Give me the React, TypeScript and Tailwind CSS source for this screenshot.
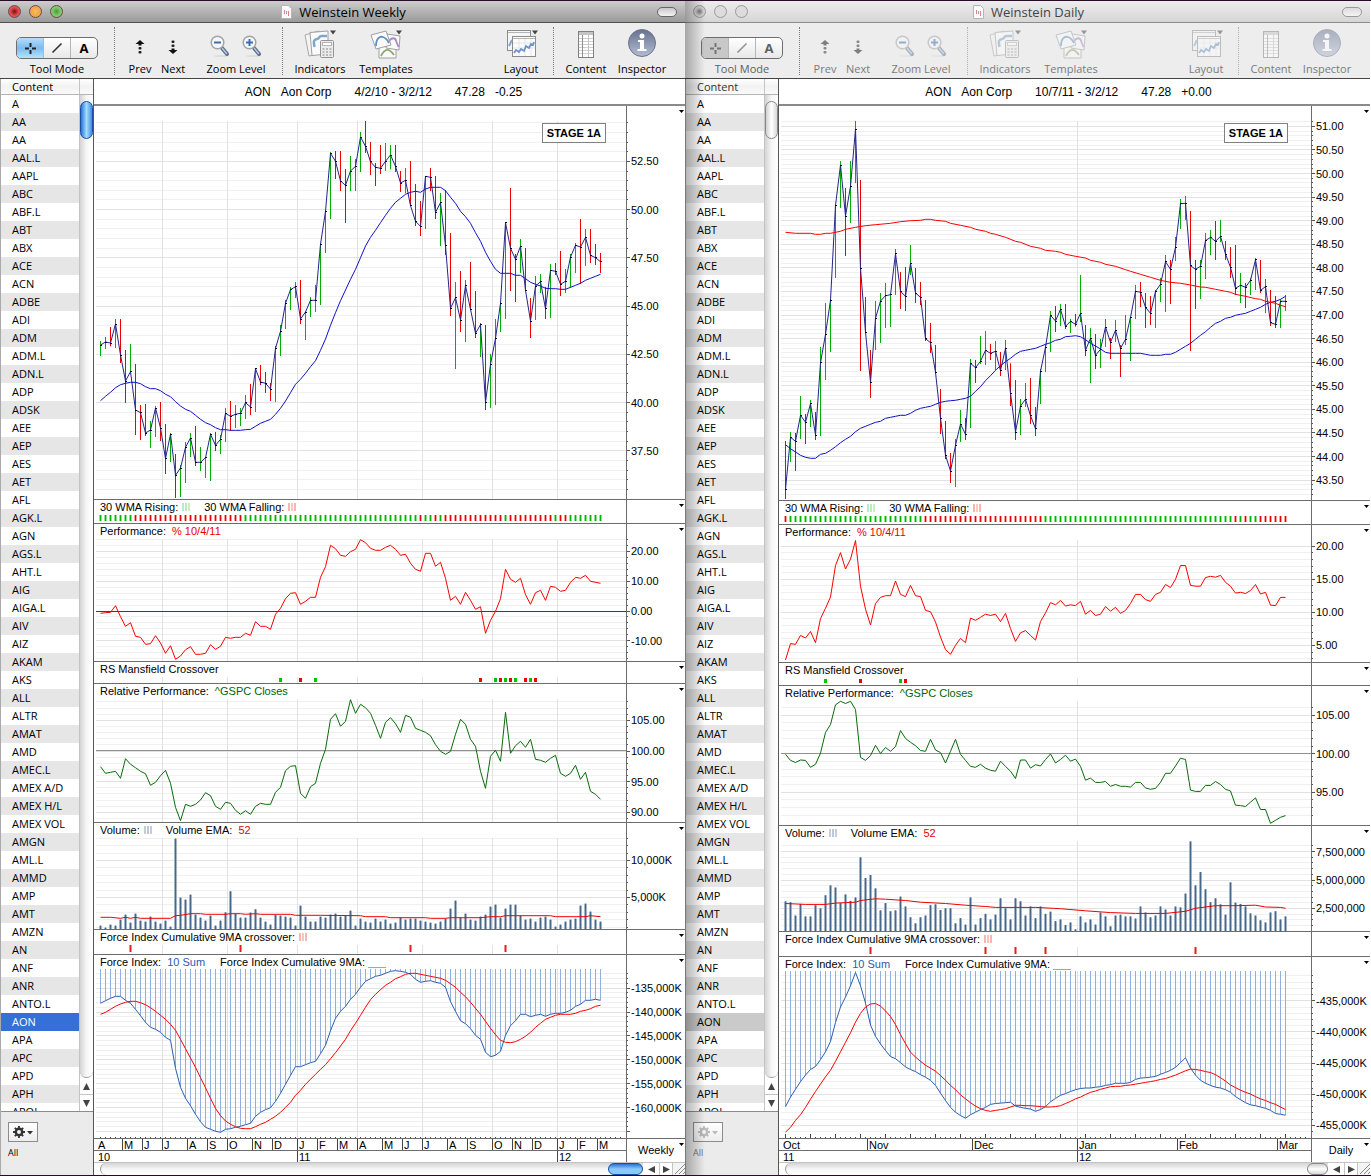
import { type ReactNode } from "react";

/* ------------------------------------------------------------------ */
/* Data                                                                */
/* ------------------------------------------------------------------ */

const SYMBOLS =
  "A,AA,AA,AAL.L,AAPL,ABC,ABF.L,ABT,ABX,ACE,ACN,ADBE,ADI,ADM,ADM.L,ADN.L,ADP,ADSK,AEE,AEP,AES,AET,AFL,AGK.L,AGN,AGS.L,AHT.L,AIG,AIGA.L,AIV,AIZ,AKAM,AKS,ALL,ALTR,AMAT,AMD,AMEC.L,AMEX A/D,AMEX H/L,AMEX VOL,AMGN,AML.L,AMMD,AMP,AMT,AMZN,AN,ANF,ANR,ANTO.L,AON,APA,APC,APD,APH,APOL".split(
    ",",
  );

// A series lists one depth per bar, in `unit` pixels below `base`.
type Scale = { base: number; unit: number };
type Pair = [number, number];

const nums = (s: string) => s.trim().split(/\s+/).map(Number);
const pairs = (s: string): Pair[] =>
  s.trim().split(/\s+/).map((p) => p.split(":").map(Number) as Pair);
const dense = (s: string): Pair[] => nums(s).map((v, i) => [i, v] as Pair);

// high, low, close
const weeklyBars = nums(`
723 768 735 711 747 726 681 739 729 657 744 672 657 789 765 750 909 843 732 815 815 792 1005 930 915 1020 938 912 1008 999
963 1044 990 918 1011 924 906 1023 984 972 1122 1076 999 1086 1002 1062 1194 1126 1095 1191 1104 1026 1149 1042 999 1071 1014 978 1098 1087
1041 1113 1087 1071 1134 1073 999 1143 1003 996 1053 1036 1005 1062 1018 924 1026 940 903 993 949 915 984 943 924 978 940 885 957 908
852 945 921 804 936 806 795 855 846 816 879 850 849 903 867 738 906 745 675 768 694 600 687 610 561 630 569 546 594 560
540 672 657 633 720 636 591 651 601 555 636 601 430 615 433 330 459 334 156 357 160 153 237 184 153 273 243 207 369 256
168 273 213 177 273 199 96 216 111 63 159 139 126 225 185 189 258 202 135 222 205 129 213 184 135 208 165 135 216 199
213 276 249 204 280 241 183 318 317 252 378 364 303 408 379 229 387 229 204 273 232 228 357 337 279 438 308 270 465 437
399 648 625 546 807 593 513 696 660 540 726 557 486 630 628 573 714 700 669 771 674 675 930 907 762 924 793 657 915 715
609 696 610 366 657 368 264 573 445 462 606 478 417 519 439 444 573 571 594 714 663 528 660 558 522 579 545 561 657 626
492 654 511 489 525 514 453 588 553 507 579 544 462 564 471 429 519 436 357 552 441 387 498 412 387 489 466 432 495 473
459 519 485`);

const weeklyAverage = dense(`
902 889 877 863 854 850 847 847 851 860 866 866 872 883 890 905 918 928 934 946 958 968 974 983 989 989 991 991 991 989
988 979 970 964 958 943 925 903 878 853 838 820 800 782 751 717 676 638 602 570 538 508 473 438 412 391 368 346 325 307
295 283 277 274 277 267 262 262 262 272 292 310 334 350 370 398 424 457 484 508 520 520 520 526 526 536 547 553 558 565
566 566 568 568 562 556 550 541 535 529 523`);

const weeklyPerformance = dense(`
340 338 337 317 350 379 368 409 412 433 431 407 429 460 437 478 468 449 440 463 463 460 434 448 439 412 415 412 412 400
406 365 379 379 388 343 325 296 280 278 313 304 292 292 232 200 136 146 166 169 155 148 119 128 145 151 151 142 136 148
166 163 190 208 214 160 160 199 187 235 301 289 313 277 301 328 320 400 361 334 296 208 238 247 235 284 313 278 271 301
259 262 274 271 247 232 235 226 244 247 250`);

const weeklyRelative = dense(`
800 820 817 814 835 776 793 803 814 821 856 847 827 811 850 922 962 913 919 913 900 878 887 919 928 907 910 931 943 932
943 919 910 913 913 877 862 812 799 797 880 895 860 850 790 748 658 641 679 664 599 640 613 623 640 676 715 667 653 671
697 646 652 685 691 697 707 734 754 763 754 703 658 673 718 739 814 865 769 751 784 637 760 737 724 742 718 778 781 787
775 766 820 829 820 796 838 817 874 883 898`);

const weeklyVolume = nums(`
317 323 314 317 299 284 308 281 302 305 290 305 311 302 320 56 233 239 224 284 293 302 287 317 302 277 214 281 293 293
278 268 293 305 314 285 287 290 293 317 257 290 305 305 290 293 284 281 290 287 272 317 296 305 308 296 305 299 311 308
293 299 296 296 302 305 308 311 305 296 266 242 293 281 299 302 290 284 260 254 293 266 254 254 287 299 296 305 293 290
299 320 314 305 299 296 257 251 275 299 305`);

const weeklyVolumeEma = pairs(
  "0:292 2:292 4:295 5:292 6:295 7:292 8:295 14:295 15:287 16:286 18:281 20:281 21:283 25:283 26:281 28:281 29:283 31:281 32:283 38:283 39:286 44:286 52:287 53:290 57:290 58:293 65:293 66:295 69:295 70:293 76:293 78:290 80:290 81:287 90:287 91:290 97:290 98:287 100:290",
);

const weeklyForce = dense(`
550 542 535 529 529 541 550 568 587 607 622 628 637 652 661 745 802 835 857 883 905 922 928 934 937 928 926 922 919 914
910 889 877 869 863 844 820 793 766 740 740 734 728 724 701 676 632 595 574 559 538 523 502 484 476 469 466 460 454 452
454 457 463 478 487 484 482 487 490 502 545 574 602 611 626 646 658 697 710 706 694 646 617 602 583 583 590 586 583 589
583 580 580 577 571 559 553 541 541 538 541`);

const weeklyForceAverage = dense(`
583 577 568 559 552 547 544 544 548 554 563 574 586 598 613 631 658 686 714 742 773 803 835 865 887 903 913 920 925 926
926 920 913 907 898 889 877 862 847 826 811 793 778 763 748 734 716 698 678 658 632 610 586 562 539 523 509 496 487 476
470 463 460 460 463 466 469 472 475 481 491 502 517 530 547 565 583 604 625 644 661 667 668 665 658 649 637 622 610 598
592 586 583 583 583 580 574 571 566 559 556`);

const dailyBars = nums(`
1023 1197 1168 996 1086 1012 999 1113 1024 888 1017 946 942 1032 967 900 981 911 936 1020 1005 741 1008 788 609 840 703 598 756 601
316 534 316 183 324 195 264 468 348 183 369 259 63 249 88 240 813 505 591 697 697 750 894 847 603 750 655 579 729 603
549 684 587 583 681 584 447 585 461 516 627 574 501 633 589 435 525 490 504 609 579 546 615 592 600 723 716 669 759 728
735 820 817 867 1002 955 963 1077 1066 1059 1149 1113 1017 1161 1036 930 1026 972 954 1020 1003 777 984 790 780 849 803 708 792 784
693 795 751 732 780 760 723 810 754 756 828 812 720 810 745 790 918 880 840 1020 996 897 1005 918 849 921 898 834 972 947
921 1008 986 807 912 814 735 816 742 633 756 646 618 696 663 612 678 628 612 687 679 657 699 664 642 680 673 525 666 640
675 768 751 684 849 715 702 807 766 717 804 748 657 741 681 714 777 727 660 726 691 735 831 745 645 735 718 651 783 652
555 657 574 546 621 577 579 684 622 588 675 640 570 684 574 534 606 553 465 636 485 480 612 508 411 483 442 297 387 311
288 360 310 333 753 497 480 627 508 480 597 499 399 537 422 390 465 412 363 480 424 360 426 409 423 480 462 441 534 502
435 585 565 519 609 556 549 624 562 534 585 541 474 570 479 480 579 571 537 639 560 570 678 668 588 684 673 597 684 604
585 633 604`);

const dailyAverage = dense(`
1034 1046 1056 1066 1072 1075 1075 1063 1060 1051 1040 1028 1018 1009 995 985 979 973 967 964 955 952 949 946 946 940 931 925 922 919
913 907 904 902 901 898 895 889 874 860 842 827 811 797 785 775 763 754 751 748 745 739 733 728 721 718 710 709 707 710
719 730 738 747 757 760 760 760 760 760 760 760 763 766 766 766 763 763 757 748 739 730 718 706 695 682 670 664 655 652
646 643 640 634 628 622 613 607 604 598 589`);

const dailyLongAverage = pairs(
  "0:397 2:400 5:400 6:403 7:403 8:400 9:400 11:394 12:388 14:382 16:377 18:374 21:370 23:365 25:362 27:361 28:358 29:358 30:361 32:364 33:370 35:376 37:382 38:388 40:394 41:400 42:403 44:412 46:424 47:427 49:439 51:445 52:451 54:454 55:457 56:463 58:469 60:474 61:481 63:487 64:493 66:499 68:509 69:514 71:523 73:532 75:541 77:547 79:550 81:555 83:561 84:562 86:568 88:574 89:577 90:583 92:589 94:596 95:598 96:604 98:610 99:616 100:620",
);

const dailyPerformance = dense(`
371 333 335 314 320 305 331 275 251 225 152 122 160 137 94 200 253 290 240 226 222 222 188 219 224 198 222 224 256 259
283 318 347 358 337 321 331 274 279 272 265 268 265 282 263 298 328 308 303 314 325 282 262 238 243 233 246 243 245 235
265 256 268 265 247 258 249 263 256 240 219 219 231 235 219 214 196 203 184 152 152 198 200 200 180 177 179 175 191 200
216 214 217 210 196 218 214 244 245 226 226`);

const dailyRelative = dense(`
590 604 609 603 604 620 613 587 539 521 475 467 472 467 486 597 604 593 569 588 574 583 572 535 553 562 570 581 583 555
580 586 610 583 555 590 604 618 620 613 622 627 629 606 618 629 646 603 603 622 614 617 602 589 610 602 592 606 601 618
650 645 655 655 653 664 660 664 664 666 655 655 668 671 669 655 634 634 617 599 602 673 676 676 662 662 653 660 671 675
708 709 711 701 691 718 718 750 743 736 732`);

const dailyVolume = nums(`
931 933 964 937 966 966 940 947 917 894 899 935 915 930 922 829 877 870 901 952 935 954 952 920 943 968 982 968 964 940
938 951 947 947 982 970 985 922 985 970 960 973 962 924 947 973 924 931 964 943 970 943 960 955 977 973 986 980 996 966
980 973 985 957 966 989 964 962 966 966 971 943 957 968 964 943 950 964 943 945 913 792 894 863 903 933 924 938 962 887
934 937 943 959 964 975 980 957 954 973 966`);

const dailyVolumeEma = pairs(
  "0:936 4:938 8:938 10:935 14:933 15:929 18:925 20:926 24:929 27:933 32:936 36:940 40:943 42:945 50:945 55:948 60:953 65:957 70:959 76:959 80:954 82:947 86:941 90:941 94:940 96:944 99:945 100:947",
);

const dailyForce = dense(`
1407 1385 1367 1349 1334 1321 1314 1298 1280 1256 1212 1176 1153 1127 1096 1127 1167 1218 1244 1262 1277 1291 1296 1305 1315 1321 1326 1333 1339 1346
1358 1376 1393 1409 1420 1428 1434 1426 1420 1414 1409 1402 1400 1399 1398 1397 1406 1409 1411 1413 1418 1414 1407 1396 1388 1381 1377 1372 1368 1365
1364 1364 1362 1361 1358 1356 1353 1353 1353 1351 1344 1341 1340 1339 1337 1332 1328 1323 1316 1305 1294 1318 1334 1346 1353 1358 1362 1364 1368 1374
1384 1391 1398 1403 1405 1408 1411 1416 1423 1425 1427`);

const dailyForceAverage = dense(`
1466 1455 1439 1426 1409 1390 1372 1355 1338 1323 1302 1280 1258 1236 1211 1191 1176 1169 1168 1174 1185 1198 1217 1240 1261 1281 1292 1302 1311 1318
1325 1335 1346 1358 1368 1380 1389 1398 1406 1412 1416 1418 1416 1414 1412 1408 1404 1404 1405 1405 1406 1407 1408 1408 1407 1405 1400 1395 1389 1385
1379 1374 1371 1367 1364 1361 1360 1360 1358 1357 1355 1353 1351 1349 1347 1344 1342 1338 1334 1329 1324 1320 1321 1323 1326 1328 1333 1340 1348 1357
1363 1369 1374 1378 1384 1389 1393 1398 1402 1408 1414`);

/* ------------------------------------------------------------------ */
/* Chart pieces                                                        */
/* ------------------------------------------------------------------ */

const LAST = 100;
const barX = (i: number) => 6.5 + 5 * i;
const depth = (s: Scale, v: number) => s.base + v * s.unit;
const snap = (y: number) => Math.floor(y) + 0.5;

const UP = "#00b000";
const DOWN = "#ee0000";

function Line({ data, scale, color }: { data: Pair[]; scale: Scale; color: string }) {
  const points = data.map(([i, v]) => `${barX(i)},${depth(scale, v).toFixed(1)}`).join(" ");
  return <polyline points={points} fill="none" stroke={color} strokeWidth="1" strokeLinejoin="round" />;
}

function PriceBars({ data, scale, firstUp }: { data: number[]; scale: Scale; firstUp: boolean }) {
  const bars = Array.from({ length: data.length / 3 }, (_, i) => ({
    high: data[3 * i],
    low: data[3 * i + 1],
    close: data[3 * i + 2],
  }));
  const closes = bars.map((b, i) => [i, b.close] as Pair);
  return (
    <g>
      {bars.map((b, i) => {
        const up = i === 0 ? firstUp : b.close <= bars[i - 1].close;
        return (
          <line
            key={i}
            x1={barX(i)}
            x2={barX(i)}
            y1={depth(scale, b.high)}
            y2={depth(scale, b.low)}
            stroke={up ? UP : DOWN}
          />
        );
      })}
      <Line data={closes} scale={scale} color="#24248a" />
      {bars.map((b, i) => (
        <rect key={i} x={barX(i) - 0.5} y={snap(depth(scale, b.close)) - 0.5} width="2" height="1" fill="#000033" />
      ))}
    </g>
  );
}

// Marks are written as runs: "g7 r22" is seven rising bars, then 22 falling ones.
function TrendStrip({ runs, y }: { runs: string; y: number }) {
  const kinds = runs.split(" ").flatMap((r) => Array<string>(Number(r.slice(1))).fill(r[0]));
  return (
    <g>
      {kinds.slice(0, LAST + 1).map((k, i) => (
        <g key={i}>
          <rect x={barX(i) - 1.5} y={y} width="3" height="6" fill={k === "g" ? "#8be48b" : "#ff9c9c"} />
          <rect x={barX(i) - 0.5} y={y} width="1" height="6" fill={k === "g" ? "#00b400" : "#e60000"} />
        </g>
      ))}
    </g>
  );
}

function Marks({ at, y }: { at: string; y: number }) {
  return (
    <g>
      {at.split(" ").map((m) => (
        <rect
          key={m}
          x={barX(Number(m.slice(1))) - 1.5}
          y={y}
          width="3"
          height="4"
          fill={m[0] === "g" ? "#00c400" : "#ee0000"}
        />
      ))}
    </g>
  );
}

function Crossings({ at, y }: { at: number[]; y: number }) {
  return (
    <g>
      {at.map((i) => (
        <rect key={i} x={barX(i) - 1} y={y} width="2" height="7" fill="#f01818" />
      ))}
    </g>
  );
}

function VolumeBars({ data, scale, floor }: { data: number[]; scale: Scale; floor: number }) {
  return (
    <g>
      {data.map((v, i) => (
        <g key={i}>
          <line x1={barX(i)} x2={barX(i)} y1={depth(scale, v)} y2={floor} stroke="#a3b4c6" strokeWidth="3" />
          <line x1={barX(i)} x2={barX(i)} y1={depth(scale, v)} y2={floor} stroke="#456789" strokeWidth="1" />
        </g>
      ))}
    </g>
  );
}

function HangingLines({ data, scale, top }: { data: Pair[]; scale: Scale; top: number }) {
  return (
    <g stroke="#8fb0de">
      {data.map(([i, v]) => (
        <line key={i} x1={barX(i)} x2={barX(i)} y1={top} y2={depth(scale, v)} />
      ))}
    </g>
  );
}

function BaseTicks({ y, tall = false }: { y: number; tall?: boolean }) {
  return (
    <g stroke="#444">
      {Array.from({ length: 105 }, (_, i) => (
        <line key={i} x1={barX(i)} x2={barX(i)} y1={y - (tall && i % 5 === 0 ? 4 : 1)} y2={y} />
      ))}
    </g>
  );
}

type Grid = { first: number; step: number; minors: number; labels: string[]; strong?: number; strongColor?: string };

type PanelSpec = {
  top: number;
  end: number;
  plotTop: number;
  legend?: ReactNode;
  grid?: Grid;
  verticals?: number[];
  note?: ReactNode;
  plot: ReactNode;
};

function gridRows(grid: Grid, plotTop: number, end: number) {
  const minor = grid.step / grid.minors;
  const rows: { y: number; major: boolean }[] = [];
  const up = Math.floor((grid.first - plotTop) / minor);
  const down = Math.floor((end - 2 - grid.first) / minor);
  for (let n = -up; n <= down; n++) rows.push({ y: snap(grid.first + n * minor), major: n % grid.minors === 0 });
  return rows;
}

function MenuArrow({ label }: { label: string }) {
  return (
    <button type="button" aria-label={label} className="absolute top-1 right-px">
      <svg width="5" height="3" className="block" aria-hidden="true">
        <path d="M0 0h5L2.5 3z" fill="#000" />
      </svg>
    </button>
  );
}

function Panel({ spec }: { spec: PanelSpec }) {
  const { top, end, plotTop, grid } = spec;
  const rows = grid ? gridRows(grid, plotTop, end) : [];
  const height = end - top;
  return (
    <section className="flex border-b border-[#6c6c6c]">
      <div className="relative min-w-0 flex-1 border-r border-[#6c6c6c]">
        <svg width="100%" height={height} className="block">
          <g transform={`translate(0 ${-top})`}>
            {rows.map((r) => (
              <line key={r.y} x1="2" x2="100%" y1={r.y} y2={r.y} stroke={r.major ? "#e2e2e2" : "#f0f0f0"} />
            ))}
            {spec.verticals?.map((x) => (
              <line key={x} x1={x} x2={x} y1={plotTop} y2={end} stroke="#e2e2e2" />
            ))}
            {grid?.strong !== undefined && (
              <line x1="2" x2="100%" y1={grid.strong} y2={grid.strong} stroke={grid.strongColor ?? "#909090"} />
            )}
            {spec.plot}
          </g>
        </svg>
        {spec.legend && (
          <div className="absolute inset-x-0 top-0 flex pl-1.5 leading-[15px] whitespace-pre">{spec.legend}</div>
        )}
        {spec.note}
      </div>
      <div className="relative w-[58px] shrink-0">
        <svg width="58" height={height} className="block overflow-visible">
          <g transform={`translate(0 ${-top})`}>
            {rows.map((r) => (
              <line key={r.y} x1="0" x2={r.major ? 3 : 1} y1={r.y} y2={r.y} stroke="#555" />
            ))}
            {grid?.labels.map((l, n) => (
              <text key={l} x="4" y={Math.round(grid.first + n * grid.step) + 4} fill="#000">
                {l}
              </text>
            ))}
          </g>
        </svg>
        <MenuArrow label="Panel menu" />
      </div>
    </section>
  );
}

function StageNote({ className }: { className: string }) {
  return (
    <div
      className={`absolute top-[17px] border border-[#808080] bg-white px-1 leading-[18px] font-bold ${className}`}
    >
      STAGE 1A
    </div>
  );
}

function Swatch({ colors }: { colors: [string, string, string] }) {
  return (
    <svg width="8" height="15" className="mr-3.5 ml-1 block" aria-hidden="true">
      {colors.map((c, n) => (
        <rect key={n} x={3 * n} y="3" width="2" height="8" fill={c} />
      ))}
    </svg>
  );
}

const wmaLegend = (
  <>
    <span>30 WMA Rising:</span>
    <Swatch colors={["#b4ecd0", "#b4f0b4", "#cceeb8"]} />
    <span>30 WMA Falling:</span>
    <Swatch colors={["#ffb4b4", "#ffc8b8", "#ffb4b4"]} />
  </>
);
const performanceLegend = (
  <>
    <span>Performance:</span>
    <span className="ml-1.5 text-[#e60000]">% 10/4/11</span>
  </>
);
const relativeLegend = (
  <>
    <span>Relative Performance:</span>
    <span className="ml-1.5 text-[#006400]">^GSPC Closes</span>
  </>
);
const volumeLegend = (
  <>
    <span>Volume:</span>
    <Swatch colors={["#c8ccd0", "#b8c8e0", "#c8ccd0"]} />
    <span>Volume EMA:</span>
    <span className="ml-1.5 text-[#e60000]">52</span>
  </>
);
const crossoverLegend = (
  <>
    <span>Force Index Cumulative 9MA crossover:</span>
    <Swatch colors={["#ffb4b4", "#ffc4b8", "#ffb4b4"]} />
  </>
);
const forceLegend = (
  <>
    <span>Force Index:</span>
    <span className="ml-1.5 text-[#2a5caa]">10 Sum</span>
    <span className="ml-[15px]">Force Index Cumulative 9MA:</span>
    <span className="mb-0.5 ml-[3px] w-[18px] self-end border-b border-[#ff8080]" />
  </>
);

const weeklyVerticals = [68.5, 133.5, 203.5, 263.5, 328.5, 398.5, 463.5];
const dailyVerticals = [298.5];

const w100: Scale = { base: 100, unit: 1 / 3 };
const w500: Scale = { base: 500, unit: 1 / 3 };
const w820: Scale = { base: 820, unit: 1 / 3 };
const d500: Scale = { base: 500, unit: 0.4311 };

const weeklyPanels: PanelSpec[] = [
  {
    top: 106,
    end: 499,
    plotTop: 121,
    verticals: weeklyVerticals,
    note: <StageNote className="right-5" />,
    grid: {
      first: 161.4,
      step: 48.24,
      minors: 5,
      labels: ["52.50", "50.00", "47.50", "45.00", "42.50", "40.00", "37.50"],
    },
    plot: (
      <>
        <PriceBars data={weeklyBars} scale={w100} firstUp />
        <Line data={weeklyAverage} scale={w100} color="#1010cc" />
      </>
    ),
  },
  {
    top: 500,
    end: 523,
    plotTop: 523,
    legend: wmaLegend,
    plot: <TrendStrip runs="g7 r22 g35 r1 g2 r1 g1 r12 g1 r9 g1 r2 g7" y={515} />,
  },
  {
    top: 524,
    end: 661,
    plotTop: 539,
    legend: performanceLegend,
    verticals: weeklyVerticals,
    grid: {
      first: 551.4,
      step: 29.8,
      minors: 5,
      labels: ["20.00", "10.00", "0.00", "-10.00"],
      strong: 611.5,
      strongColor: "#c80000",
    },
    plot: <Line data={weeklyPerformance} scale={w500} color="#ff0000" />,
  },
  {
    top: 662,
    end: 683,
    plotTop: 677,
    legend: "RS Mansfield Crossover",
    verticals: weeklyVerticals,
    plot: <Marks at="g36 r40 g43 r76 g79 r80 g81 r82 g83 r85 g86 r87" y={678} />,
  },
  {
    top: 684,
    end: 822,
    plotTop: 699,
    legend: relativeLegend,
    verticals: weeklyVerticals,
    grid: { first: 720.3, step: 30.7, minors: 5, labels: ["105.00", "100.00", "95.00", "90.00"], strong: 750.5 },
    plot: <Line data={weeklyRelative} scale={w500} color="#0a6a0a" />,
  },
  {
    top: 823,
    end: 929,
    plotTop: 838,
    legend: volumeLegend,
    verticals: weeklyVerticals,
    grid: { first: 860.4, step: 37, minors: 5, labels: ["10,000K", "5,000K"] },
    plot: (
      <>
        <VolumeBars data={weeklyVolume} scale={w820} floor={929} />
        <Line data={weeklyVolumeEma} scale={w820} color="#ee0000" />
      </>
    ),
  },
  {
    top: 930,
    end: 954,
    plotTop: 945,
    legend: crossoverLegend,
    verticals: weeklyVerticals,
    plot: <Crossings at={[6, 28, 62, 81]} y={945} />,
  },
  {
    top: 955,
    end: 1138,
    plotTop: 969,
    legend: forceLegend,
    verticals: weeklyVerticals,
    grid: {
      first: 988.1,
      step: 23.9,
      minors: 5,
      labels: ["-135,000K", "-140,000K", "-145,000K", "-150,000K", "-155,000K", "-160,000K"],
    },
    plot: (
      <>
        <HangingLines data={weeklyForce} scale={w820} top={969} />
        <Line data={weeklyForce} scale={w820} color="#2b5fae" />
        <Line data={weeklyForceAverage} scale={w820} color="#ff0000" />
        <BaseTicks y={1138} />
      </>
    ),
  },
];

const dailyPanels: PanelSpec[] = [
  {
    top: 106,
    end: 500,
    plotTop: 121,
    verticals: dailyVerticals,
    note: <StageNote className="right-[23px]" />,
    grid: {
      first: 126.4,
      step: 23.58,
      minors: 5,
      labels: Array.from({ length: 16 }, (_, n) => (51 - n / 2).toFixed(2)),
    },
    plot: (
      <>
        <PriceBars data={dailyBars} scale={w100} firstUp={false} />
        <Line data={dailyAverage} scale={w100} color="#1010cc" />
        <Line data={dailyLongAverage} scale={w100} color="#ff0000" />
      </>
    ),
  },
  {
    top: 501,
    end: 524,
    plotTop: 524,
    legend: wmaLegend,
    plot: <TrendStrip runs="r1 g27 r24 g38 r1 g1 r1 g2 r6" y={516} />,
  },
  {
    top: 525,
    end: 662,
    plotTop: 540,
    legend: performanceLegend,
    verticals: dailyVerticals,
    grid: { first: 546.2, step: 33.07, minors: 5, labels: ["20.00", "15.00", "10.00", "5.00"] },
    plot: <Line data={dailyPerformance} scale={d500} color="#ff0000" />,
  },
  {
    top: 663,
    end: 685,
    plotTop: 678,
    legend: "RS Mansfield Crossover",
    verticals: dailyVerticals,
    plot: <Marks at="g8 r15 g23 r24" y={679} />,
  },
  {
    top: 686,
    end: 825,
    plotTop: 701,
    legend: relativeLegend,
    verticals: dailyVerticals,
    grid: { first: 715.2, step: 38.5, minors: 5, labels: ["105.00", "100.00", "95.00"], strong: 753.5 },
    plot: <Line data={dailyRelative} scale={d500} color="#0a6a0a" />,
  },
  {
    top: 826,
    end: 931,
    plotTop: 841,
    legend: volumeLegend,
    verticals: dailyVerticals,
    grid: { first: 851.6, step: 28.4, minors: 5, labels: ["7,500,000", "5,000,000", "2,500,000"] },
    plot: (
      <>
        <VolumeBars data={dailyVolume} scale={d500} floor={931} />
        <Line data={dailyVolumeEma} scale={d500} color="#ee0000" />
      </>
    ),
  },
  {
    top: 932,
    end: 956,
    plotTop: 947,
    legend: crossoverLegend,
    verticals: dailyVerticals,
    plot: <Crossings at={[17, 40, 46, 52, 82]} y={947} />,
  },
  {
    top: 957,
    end: 1138,
    plotTop: 971,
    legend: forceLegend,
    verticals: dailyVerticals,
    grid: {
      first: 1000.8,
      step: 31.15,
      minors: 5,
      labels: ["-435,000K", "-440,000K", "-445,000K", "-450,000K", "-455,000K"],
    },
    plot: (
      <>
        <HangingLines data={dailyForce} scale={d500} top={971} />
        <Line data={dailyForce} scale={d500} color="#2b5fae" />
        <Line data={dailyForceAverage} scale={d500} color="#ff0000" />
        <BaseTicks y={1138} tall />
      </>
    ),
  },
];

type Span = { label: string; to?: number };
const weeklyMonths: Span[] = [
  ["A", 122], ["M", 142], ["J", 162], ["J", 187], ["A", 207], ["S", 227], ["O", 252], ["N", 272], ["D", 297],
  ["J", 317], ["F", 337], ["M", 357], ["A", 382], ["M", 402], ["J", 422], ["J", 447], ["A", 467], ["S", 492],
  ["O", 512], ["N", 532], ["D", 557], ["J", 577], ["F", 597], ["M", 0],
].map(([label, to]) => ({ label: String(label), to: Number(to) || undefined }));
const dailyMonths: Span[] = [
  { label: "Oct", to: 182 },
  { label: "Nov", to: 287 },
  { label: "Dec", to: 392 },
  { label: "Jan", to: 492 },
  { label: "Feb", to: 592 },
  { label: "Mar" },
];

function DateRow({ spans }: { spans: Span[] }) {
  let from = 94;
  return (
    <div className="flex h-[11px] leading-[12px]">
      {spans.map((s, n) => {
        const width = s.to ? s.to - from : undefined;
        if (s.to) from = s.to;
        return (
          <div
            key={n}
            className={`${n === 0 ? "pl-1" : "border-l border-[#444] pl-px"} ${s.to ? "shrink-0" : "min-w-0 flex-1"}`}
            style={{ width }}
          >
            {s.label}
          </div>
        );
      })}
    </div>
  );
}

/* ------------------------------------------------------------------ */
/* Toolbar icons                                                       */
/* ------------------------------------------------------------------ */

function StepIcon({ down = false }: { down?: boolean }) {
  return (
    <svg width="12" height="16" viewBox="0 0 12 16" className={down ? "rotate-180" : ""} aria-hidden="true">
      <path d="M6 1l4.500 4H7.500v1.500h-3V5H1.500z" fill="#111" />
      <rect x="4.500" y="8" width="3" height="2.500" rx="1" fill="#222" />
      <rect x="4.500" y="12" width="3" height="2.500" rx="1" fill="#222" />
    </svg>
  );
}

function ZoomIcon({ plus = false }: { plus?: boolean }) {
  return (
    <svg width="22" height="24" viewBox="0 0 22 24" aria-hidden="true">
      <ellipse cx="12" cy="22" rx="7" ry="1" fill="#dedede" />
      <path d="M13 14l5 6" stroke="#5d6f8c" strokeWidth="4" strokeLinecap="round" />
      <path d="M13.500 14.500l4 5" stroke="#b4c6de" strokeWidth="1.500" strokeLinecap="round" />
      <circle cx="8.500" cy="8.500" r="6.300" fill="#f4f8fc" stroke="#a4a4a4" strokeWidth="1.500" />
      <path d={plus ? "M5 8.500h7M8.500 5v7" : "M5 8.500h7"} stroke="#3d6fae" strokeWidth="2" />
    </svg>
  );
}

const Caret = ({ x }: { x: number }) => <path d={`M${x} 1.500h6l-3 4z`} fill="#444" />;

function IndicatorsIcon() {
  return (
    <svg width="32" height="32" viewBox="0 0 32 32" aria-hidden="true">
      <path d="M1 6l14-4 3 22-13 3z" fill="#f4f4f4" stroke="#a8a8a8" />
      <path d="M6 3.500l18-1.500v23l-16 1.500z" fill="#fbfbfb" stroke="#a0a0a0" />
      <path d="M10.500 18c-1.500-6-.500-7.500 2.500-8s1.500-3 4.500-3H23" fill="none" stroke="#7fa6cf" strokeWidth="2.500" />
      <rect x="16.500" y="11.500" width="13" height="17" rx="1" fill="#ececec" stroke="#949494" />
      <rect x="18.500" y="13.500" width="9" height="3" fill="#fff" stroke="#b4b4b4" />
      <path d="M18.500 20h9M18.500 23h9M18.500 26h9" stroke="#a8a8a8" strokeWidth="1.500" strokeDasharray="2 1.500" />
      <Caret x={26} />
    </svg>
  );
}

function TemplatesIcon() {
  return (
    <svg width="32" height="32" viewBox="0 0 32 32" aria-hidden="true">
      <path d="M9 17h17v12H9z" fill="#fafafa" stroke="#a0a0a0" />
      <path d="M11 27c4-8 8-8 13-1" fill="none" stroke="#8cab6e" strokeWidth="1.800" />
      <path d="M17 5l13 2-1 14-13-2z" fill="#fafafa" stroke="#a0a0a0" />
      <path d="M18.500 13c3-5 7-5 8 0l2 5" fill="none" stroke="#a98bc9" strokeWidth="1.800" />
      <path d="M1 6l15-4 5 14-15 4z" fill="#fafafa" stroke="#a0a0a0" />
      <path d="M6 17c0-8 4-10 7-9s5 4 6 6" fill="none" stroke="#5d8fc6" strokeWidth="1.800" />
      <Caret x={26} />
    </svg>
  );
}

function LayoutIcon() {
  return (
    <svg width="34" height="32" viewBox="0 0 34 32" aria-hidden="true">
      <rect x="3.500" y="1.500" width="23" height="20" fill="#f6f6f6" stroke="#8c8c8c" />
      <path d="M4 3.500h22" stroke="#b4b4b4" />
      <path d="M5 17l3-6" fill="none" stroke="#7fa6d4" strokeWidth="2" />
      <rect x="8.500" y="7.500" width="23" height="20" fill="#fcfcfc" stroke="#8c8c8c" />
      <path d="M9 9.500h22" stroke="#b4b4b4" />
      <path d="M9 14h22M9 19h22M15 10v17M21 10v17M27 10v17" stroke="#e6e6e6" />
      <path d="M10 24l2-3 3 2 2-3 3 2 2-5 3 2 2-4 2 1 1-3" fill="none" stroke="#6a94cc" strokeWidth="1.800" />
      <Caret x={28} />
    </svg>
  );
}

function ContentIcon() {
  return (
    <svg width="18" height="30" viewBox="0 0 18 30" aria-hidden="true">
      <rect x="1.500" y="1.500" width="15" height="26" fill="#fff" stroke="#808080" />
      <rect x="2" y="2" width="14" height="3" fill="#c4c4c4" />
      <path d="M2 8.500h14M2 11.500h14M2 14.500h14M2 17.500h14M2 20.500h14M2 23.500h14" stroke="#d0d0d0" />
      <path d="M5.500 5v22" stroke="#909090" />
      <path d="M11.500 5v22" stroke="#c4c4c4" />
    </svg>
  );
}

function InspectorIcon({ id }: { id: string }) {
  return (
    <svg width="30" height="30" viewBox="0 0 30 30" aria-hidden="true">
      <defs>
        <linearGradient id={id} x1="0" y1="0" x2="0" y2="1">
          <stop offset="0" stopColor="#66728f" />
          <stop offset="1" stopColor="#b2bcd4" />
        </linearGradient>
      </defs>
      <circle cx="15" cy="15" r="13.500" fill={`url(#${id})`} stroke="#6c7488" />
      <circle cx="15" cy="8" r="2.500" fill="#fff" />
      <path d="M11 12h6v9h2.500v2h-9v-2H13v-7h-2z" fill="#fff" />
    </svg>
  );
}

function ToolButton({ label, className, children }: { label: string; className: string; children: ReactNode }) {
  return (
    <button type="button" className={`flex shrink-0 flex-col items-center ${className}`}>
      <span className="flex h-[38px] items-center justify-center">{children}</span>
      <span className="leading-[14px] whitespace-nowrap">{label}</span>
    </button>
  );
}

const Divider = ({ className = "" }: { className?: string }) => (
  <div className={`mt-1 h-12 shrink-0 border-l border-dotted border-[#777] ${className}`} />
);

function Toolbar({ active, id }: { active: boolean; id: string }) {
  return (
    <div
      className={`flex h-[55px] bg-[#ededed] pr-[18px] pl-4 text-[11px] ${active ? "text-black" : "text-[#606060]"}`}
    >
      <div className="flex w-[82px] shrink-0 flex-col items-center">
        <div className="mt-3.5 flex h-[22px] w-full overflow-hidden rounded-[5px] border border-[#6e6e6e] bg-linear-to-b from-white to-[#e8e8e8]">
          <button
            type="button"
            aria-label="Crosshair tool"
            aria-pressed="true"
            className={`flex flex-1 items-center justify-center ${active ? "bg-linear-to-b from-[#b7dcf8] via-[#7dbbee] to-[#b4e4fc]" : "bg-[#c8c8c8]"}`}
          >
            <svg width="13" height="13" aria-hidden="true" className={active ? "" : "opacity-50"}>
              <path d="M6.500 1v4M6.500 8v4M1 6.500h4M8 6.500h4" stroke="#222" strokeWidth="2" />
            </svg>
          </button>
          <button
            type="button"
            aria-label="Line tool"
            className="flex flex-1 items-center justify-center border-x border-[#b5b5b5]"
          >
            <svg width="12" height="12" aria-hidden="true" className={active ? "" : "opacity-50"}>
              <path d="M1.500 10.500l9-9" stroke="#333" strokeWidth="1.600" />
            </svg>
          </button>
          <button type="button" aria-label="Text tool" className="flex-1 text-[13px] leading-[20px] font-bold">
            A
          </button>
        </div>
        <span className="mt-[3px] leading-[14px]">Tool Mode</span>
      </div>
      <Divider className="ml-4" />
      <div className={`flex min-w-0 flex-1 ${active ? "" : "opacity-50"}`}>
        <ToolButton label="Prev" className="ml-[9px] w-8 pt-px text-black">
          <span className="pt-2">
            <StepIcon />
          </span>
        </ToolButton>
        <ToolButton label="Next" className="ml-px w-8 pt-px text-black">
          <span className="pt-2">
            <StepIcon down />
          </span>
        </ToolButton>
        <div
          role="group"
          aria-label="Zoom Level"
          className="ml-[15px] flex w-16 shrink-0 flex-col items-center pt-px text-black"
        >
          <div className="flex h-[38px] items-center gap-2.5 pt-1.5">
            <button type="button" aria-label="Zoom out">
              <ZoomIcon />
            </button>
            <button type="button" aria-label="Zoom in">
              <ZoomIcon plus />
            </button>
          </div>
          <span className="leading-[14px] whitespace-nowrap">Zoom Level</span>
        </div>
        <Divider className="ml-3.5" />
        <ToolButton label="Indicators" className="ml-[9px] w-14 pt-px text-black">
          <span className="pt-1">
            <IndicatorsIcon />
          </span>
        </ToolButton>
        <ToolButton label="Templates" className="ml-2.5 w-14 pt-px text-black">
          <span className="pt-1">
            <TemplatesIcon />
          </span>
        </ToolButton>
        <ToolButton label="Layout" className="ml-auto w-9 pt-px text-black">
          <span className="pt-1">
            <LayoutIcon />
          </span>
        </ToolButton>
        <Divider className="ml-3.5" />
        <ToolButton label="Content" className="ml-2.5 w-11 pt-px text-black">
          <span className="pt-1">
            <ContentIcon />
          </span>
        </ToolButton>
        <ToolButton label="Inspector" className="ml-[9px] w-[50px] pt-px text-black">
          <InspectorIcon id={id} />
        </ToolButton>
      </div>
    </div>
  );
}

/* ------------------------------------------------------------------ */
/* Window frame                                                        */
/* ------------------------------------------------------------------ */

function TitleBar({ title, active }: { title: string; active: boolean }) {
  const lights = active
    ? [
        "bg-radial from-[#7a1010] via-[#e04848] to-[#e87070]",
        "bg-radial from-[#f0c060] via-[#f4a648] to-[#e8a858]",
        "bg-radial from-[#4c9a3c] via-[#7cc868] to-[#90d080]",
      ]
    : ["bg-radial from-[#777] via-[#ccc] to-[#ddd]", "bg-[#dcdcdc]", "bg-[#dcdcdc]"];
  const names = ["Close", "Minimise", "Zoom"];
  return (
    <header
      className={`relative flex h-[22px] items-center justify-center border-b ${
        active
          ? "border-[#515151] bg-linear-to-b from-[#cdcdcd] to-[#9a9a9a] text-black"
          : "border-[#8c8c8c] bg-linear-to-b from-[#ededed] to-[#d6d6d6] text-[#444]"
      }`}
    >
      <div className="absolute left-2 flex gap-2">
        {lights.map((c, n) => (
          <button
            key={n}
            type="button"
            aria-label={names[n]}
            className={`size-[13px] rounded-full border ${active ? "border-[#6a4a4a]" : "border-[#999]"} ${c}`}
          />
        ))}
      </div>
      <div className="flex items-center gap-[7px] pl-0.5">
        <svg width="11" height="14" viewBox="0 0 11 14" aria-hidden="true">
          <path d="M.5.500h7l3 3v10H.500z" fill="#fbfbfb" stroke="#b5b5b5" />
          <path d="M3.500 5v4M7.500 6v5" stroke="#e08080" />
          <path d="M5.500 6v3" stroke="#8aa0c8" />
        </svg>
        <h1 className="text-[13px] leading-[20px]">{title}</h1>
      </div>
      <button
        type="button"
        aria-label="Toggle toolbar"
        className={`absolute right-2 h-[10px] w-5 rounded-full border bg-linear-to-b ${
          active ? "border-[#666] from-[#c8c8c8] to-[#f4f4f4]" : "border-[#999] from-[#dcdcdc] to-[#f4f4f4]"
        }`}
      />
    </header>
  );
}

function Arrow({ d, label, className }: { d: string; label: string; className: string }) {
  return (
    <button type="button" aria-label={label} className={`flex items-center justify-center ${className}`}>
      <svg width="7" height="7" viewBox="0 0 7 7" aria-hidden="true">
        <path d={d} fill="#444" />
      </svg>
    </button>
  );
}

function Sidebar({ active }: { active: boolean }) {
  return (
    <aside className="flex w-[93px] shrink-0 flex-col border-l border-[#aaa] text-[11px]">
      <div className="flex h-4 border-b border-[#b4b4b4] bg-linear-to-b from-white via-[#f2f2f2] to-[#fafafa]">
        <h2 className={`w-[78px] pl-[11px] leading-[16px] ${active ? "" : "text-[#333]"}`}>Content</h2>
        <div className="flex-1 border-l border-[#c4c4c4]" />
      </div>
      <div className="flex h-0 grow overflow-hidden">
        <ul className="w-[78px]">
          {SYMBOLS.map((s, n) => {
            const chosen = s === "AON";
            const tone = chosen
              ? active
                ? "bg-[#3470d6] text-white"
                : "bg-[#cacaca]"
              : n % 2
                ? "bg-[#e6e6e6]"
                : "bg-white";
            return (
              <li key={n}>
                <button
                  type="button"
                  aria-current={chosen}
                  className={`block h-[18px] w-full pl-[11px] text-left leading-[18px] whitespace-nowrap ${tone}`}
                >
                  {s}
                </button>
              </li>
            );
          })}
        </ul>
        <div className="flex flex-1 flex-col border-l border-[#c4c4c4] bg-white">
          <div className="flex-1 rounded-b-full border-b border-[#999] bg-linear-to-r from-[#d4d4d4] via-[#f6f6f6] to-white pt-1.5">
            <div
              className={`mx-auto h-[38px] w-[13px] rounded-full border ${
                active
                  ? "border-[#1a4fa8] bg-linear-to-r from-[#2a72d8] via-[#a4dcfc] to-[#3c8ce4]"
                  : "border-[#888] bg-linear-to-r from-[#d0d0d0] via-white to-[#d8d8d8]"
              }`}
            />
          </div>
          <Arrow d="M3.500 0L7 7H0z" label="Scroll up" className="h-[17px] border-b border-[#c4c4c4]" />
          <Arrow d="M3.500 7L0 0h7z" label="Scroll down" className="h-4" />
        </div>
      </div>
      <div className="h-16 border-t border-[#8c8c8c] bg-[#ebebeb] pt-2.5 pl-[7px]">
        <button
          type="button"
          aria-label="Actions"
          className="flex h-5 w-[30px] items-center justify-center gap-px border border-[#8c8c8c] bg-linear-to-b from-white to-[#ededed]"
        >
          <svg width="22" height="14" viewBox="0 0 22 14" aria-hidden="true" className={active ? "" : "opacity-30"}>
            <circle cx="7" cy="7" r="3.200" fill="none" stroke="#333" strokeWidth="2.400" />
            <path
              d="M7 1v2.500M7 10.500V13M1 7h2.500M10.500 7H13M2.800 2.800l1.700 1.700M9.500 9.500l1.700 1.700M2.800 11.200l1.700-1.700M9.500 4.500l1.700-1.700"
              stroke="#333"
              strokeWidth="1.800"
            />
            <path d="M15 6h6l-3 3.500z" fill="#333" />
          </svg>
        </button>
        <p className={`mt-1 text-[9px] leading-[14px] ${active ? "" : "text-[#777]"}`}>All</p>
      </div>
    </aside>
  );
}

function HorizontalScroll({ active }: { active: boolean }) {
  return (
    <div className="flex h-[13px] border-t border-[#c4c4c4] bg-white">
      <div className="ml-1.5 flex min-w-0 flex-1 justify-end rounded-l-full border-l border-[#999] bg-linear-to-b from-[#d4d4d4] via-[#f6f6f6] to-white">
        <div
          className={`h-3 rounded-full border ${
            active
              ? "w-[35px] border-[#1a4fa8] bg-linear-to-b from-[#2a72d8] via-[#8cc8f8] to-[#7cd0fc]"
              : "w-[21px] border-[#888] bg-linear-to-b from-[#d0d0d0] via-white to-[#d8d8d8]"
          }`}
        />
      </div>
      <Arrow d="M0 3.500L7 0v7z" label="Scroll left" className="w-4" />
      <Arrow d="M7 3.500L0 7V0z" label="Scroll right" className="w-[13px] border-l border-[#c4c4c4]" />
      <svg width="13" height="12" className="border-l border-[#c4c4c4] bg-[#f4f4f4]" aria-hidden="true">
        <path d="M2 11L12 1M6 11l6-6M10 11l2-2" stroke="#888" />
      </svg>
    </div>
  );
}

type WindowProps = {
  id: string;
  title: string;
  active: boolean;
  quote: string[];
  panels: PanelSpec[];
  months: Span[];
  years: Span[];
  period: string;
};

function ChartWindow({ id, title, active, quote, panels, months, years, period }: WindowProps) {
  const spacing = ["", "ml-2.5", "ml-[23px]", "ml-[23px]", "ml-2.5"];
  return (
    <section
      aria-label={title}
      className="relative flex min-w-0 flex-col bg-white font-['Open_Sans','Noto_Sans',sans-serif] text-black"
    >
      <TitleBar title={title} active={active} />
      <Toolbar active={active} id={id} />
      <div className="flex border-t border-[#444]">
        <Sidebar active={active} />
        <main className="min-w-0 flex-1 border-l border-[#555] font-['Liberation_Sans',Arial,sans-serif] text-[11px]">
          <div className="flex h-[27px] items-center justify-center border-b-2 border-[#8a8a8a] pr-3 text-[12px]">
            {quote.map((q, n) => (
              <span key={n} className={spacing[n]}>
                {q}
              </span>
            ))}
          </div>
          {panels.map((p) => (
            <Panel key={p.top} spec={p} />
          ))}
          <div className="flex">
            <div className="min-w-0 flex-1 border-r border-[#6c6c6c]">
              <DateRow spans={months} />
              <div className="border-t border-[#6c6c6c]">
                <DateRow spans={years} />
              </div>
            </div>
            <button type="button" className="relative w-[58px] shrink-0 text-center">
              {period}
              <svg width="5" height="3" className="absolute top-1 right-px" aria-hidden="true">
                <path d="M0 0h5L2.500 3z" fill="#000" />
              </svg>
            </button>
          </div>
          <HorizontalScroll active={active} />
        </main>
      </div>
      {!active && (
        <div className="pointer-events-none absolute inset-y-0 left-0 w-5 bg-linear-to-r from-black/30 to-transparent" />
      )}
    </section>
  );
}

export default function App() {
  return (
    <div className="grid grid-cols-2 border-y border-[#2a0a2a] bg-white pr-px">
      <ChartWindow
        id="info-weekly"
        title="Weinstein Weekly"
        active
        quote={["AON", "Aon Corp", "4/2/10 - 3/2/12", "47.28", "-0.25"]}
        panels={weeklyPanels}
        months={weeklyMonths}
        years={[{ label: "10", to: 297 }, { label: "11", to: 557 }, { label: "12" }]}
        period="Weekly"
      />
      <ChartWindow
        id="info-daily"
        title="Weinstein Daily"
        active={false}
        quote={["AON", "Aon Corp", "10/7/11 - 3/2/12", "47.28", "+0.00"]}
        panels={dailyPanels}
        months={dailyMonths}
        years={[{ label: "11", to: 392 }, { label: "12" }]}
        period="Daily"
      />
    </div>
  );
}
